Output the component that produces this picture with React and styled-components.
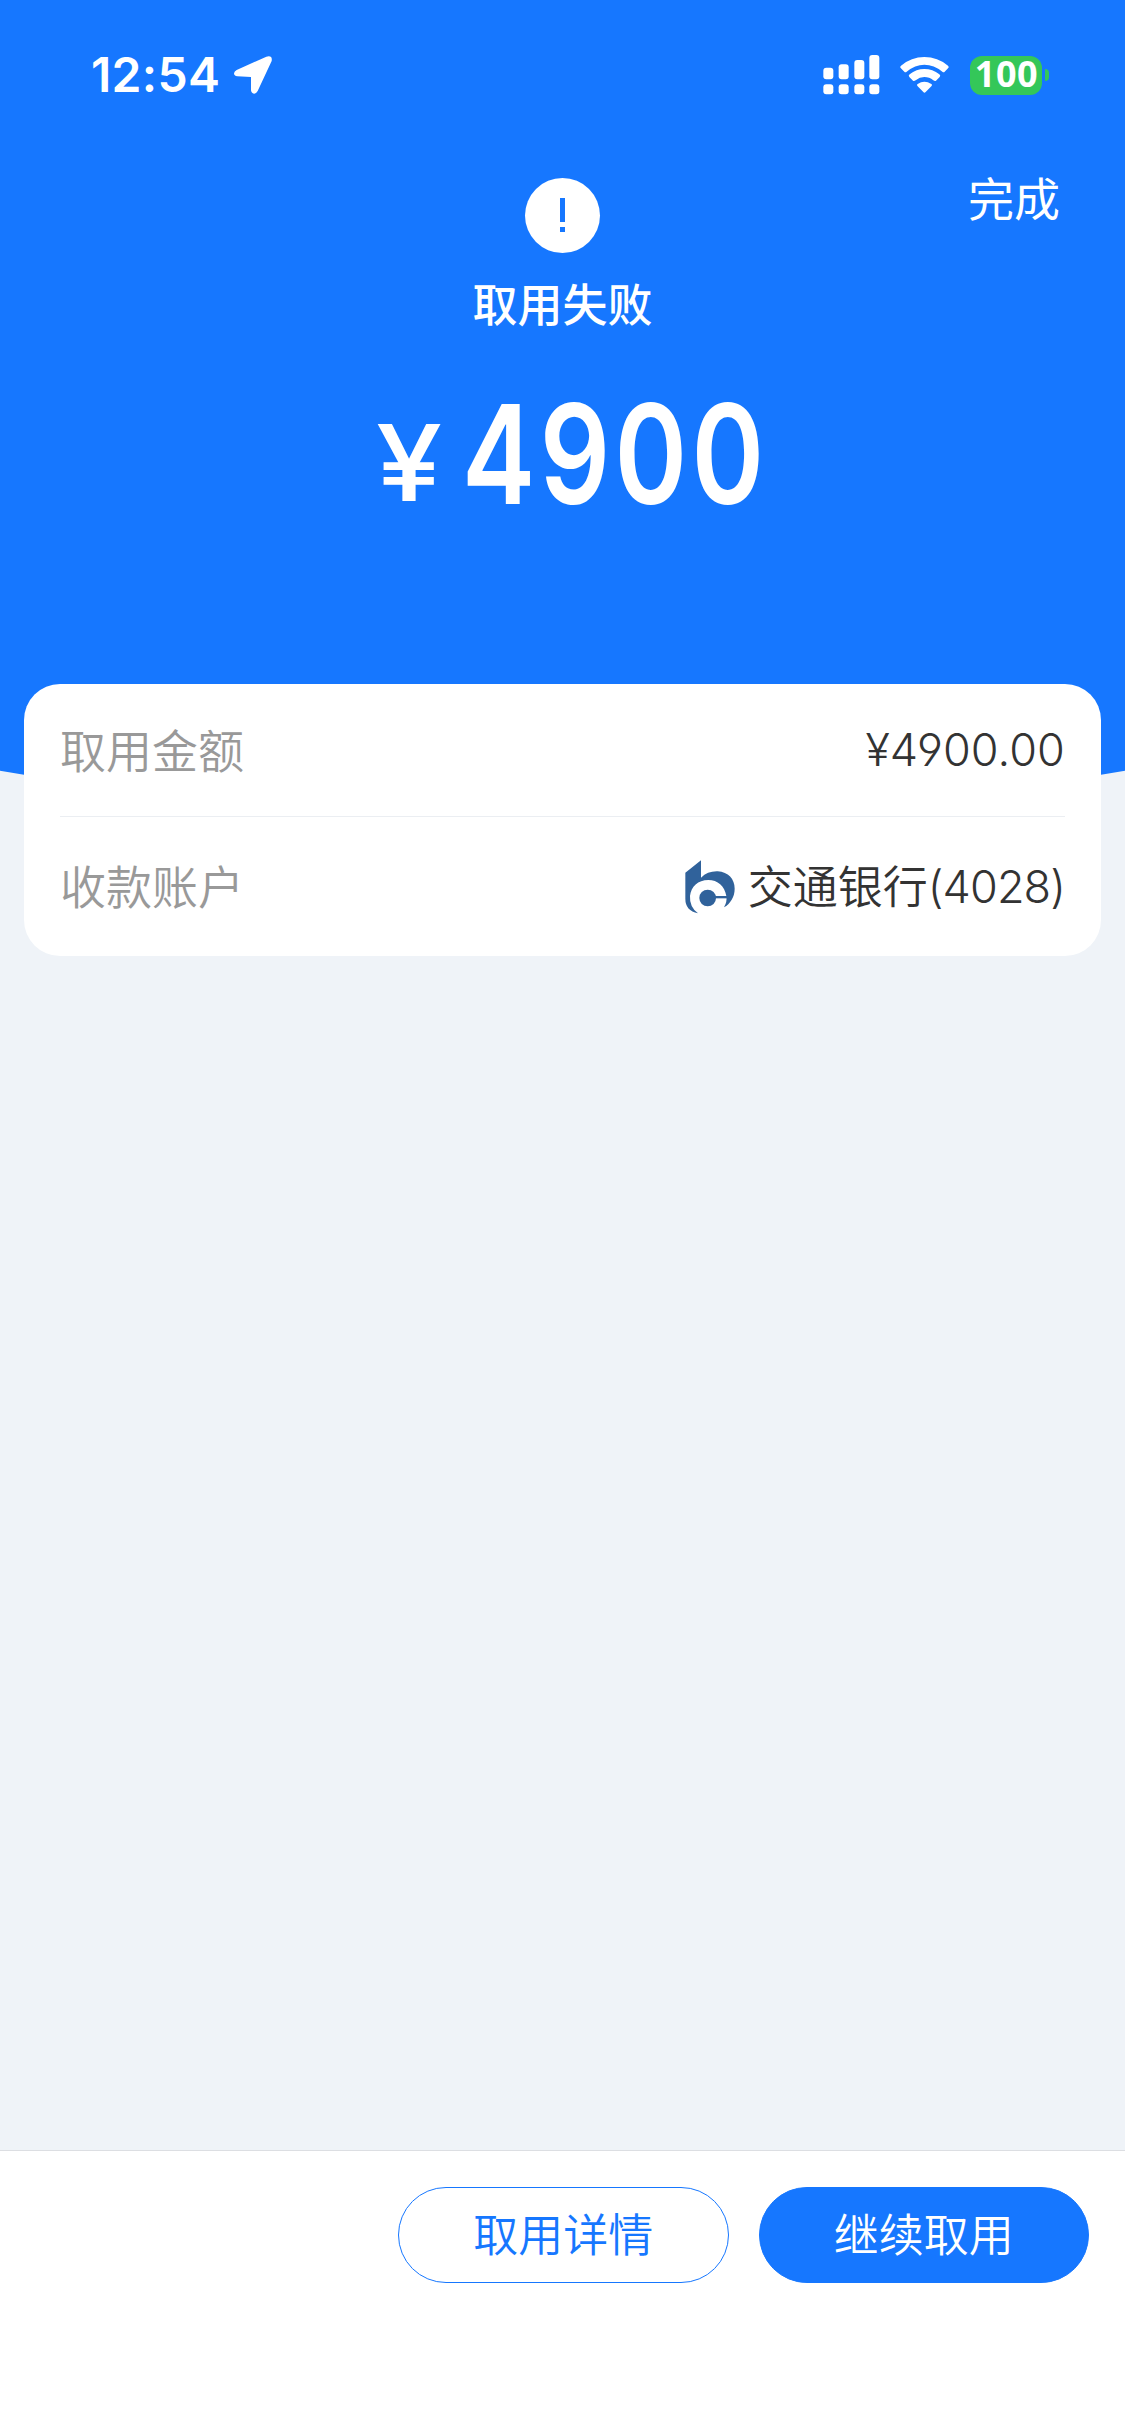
import React from "react";
import styled, { createGlobalStyle } from "styled-components";

const blue = "#1677ff";
const pageGrey = "#eff3f8";
const cjk = `"Noto Sans CJK SC", sans-serif`;

const GlobalStyle = createGlobalStyle`
  * { box-sizing: border-box; }
  body { margin: 0; background: ${pageGrey}; font-family: ${cjk}; }
`;

const Screen = styled.div`
  width: 1125px;
  height: 2435px;
  display: flex;
  flex-direction: column;
  background: ${pageGrey};
  overflow: hidden;
`;

const Header = styled.header`
  flex: none;
  height: 819px;
  background: ${blue};
  clip-path: circle(3300px at 50% -2481px);
  color: #fff;
  display: flex;
  flex-direction: column;
`;

const StatusBar = styled.div`
  height: 178px;
  padding: 45px 76px 0 91px;
  display: flex;
  justify-content: space-between;
  align-items: flex-start;
`;

const StatusGroup = styled.div`
  height: 60px;
  display: flex;
  align-items: center;
`;

const Clock = styled.span`
  width: 143px;
  font: 600 48px/60px Inter, sans-serif;
  letter-spacing: 0.3px;
  white-space: nowrap;
`;

const Glyph = styled.svg`
  display: block;
  flex: none;
  width: ${(p) => p.$w}px;
  height: ${(p) => p.$h}px;
  margin-right: ${(p) => p.$gap || 0}px;
`;

const Battery = styled.span`
  width: 72px;
  height: 39px;
  padding-left: 1px;
  border-radius: 12px;
  background: #34c759;
  font: 700 36px/36px "Noto Sans", sans-serif;
  letter-spacing: 0.5px;
  text-align: center;
`;

const BatteryTip = styled.span`
  width: 4px;
  height: 12px;
  margin-left: 3px;
  border-radius: 0 4px 4px 0;
  background: #34c759;
`;

const NavRow = styled.div`
  height: 75px;
  padding: 0 65px;
  display: grid;
  grid-template-columns: 1fr auto 1fr;
`;

const Done = styled.a`
  grid-column: 3;
  justify-self: end;
  font-size: 46px;
  line-height: 36px;
`;

const AlertBadge = styled.div`
  grid-column: 2;
  width: 75px;
  height: 75px;
  border-radius: 50%;
  background: #fff;
  display: flex;
  flex-direction: column;
  align-items: center;
  padding-top: 20px;
  gap: 5px;
`;

const AlertBar = styled.span`
  width: 5px;
  height: ${(p) => p.$h}px;
  background: ${blue};
`;

const ResultTitle = styled.h1`
  margin: 20px 0 0;
  font-size: 45px;
  font-weight: 500;
  line-height: 60px;
  text-align: center;
`;

const Amount = styled.div`
  margin-top: 41px;
  padding-left: 376px;
  display: flex;
  align-items: baseline;
  font-family: Inter, sans-serif;
  line-height: 160px;
`;

const Currency = styled.span`
  width: 86px;
  font-size: 106px;
  font-weight: 500;
  transform: translateY(-3px) scaleX(1.12);
  transform-origin: left;
`;

const Digits = styled.span`
  font-size: 138px;
  font-weight: 620;
  letter-spacing: 5.5px;
  transform: scaleX(0.798);
  transform-origin: left;
`;

const Card = styled.section`
  position: relative;
  flex: none;
  margin: -135px 24px 0;
  height: 272px;
  padding: 0 36px;
  border-radius: 36px;
  background: #fff;
`;

const Row = styled.div`
  height: ${(p) => p.$h}px;
  display: flex;
  align-items: center;
  justify-content: space-between;
  border-bottom: ${(p) => (p.$divided ? "1px solid #ebeef2" : "0")};
`;

const Label = styled.span`
  padding-bottom: 5px;
  font-size: 46px;
  font-weight: 350;
  line-height: 60px;
  color: #999;
`;

const Value = styled.span`
  display: flex;
  align-items: center;
  font-size: 45px;
  font-weight: 350;
  line-height: 60px;
  color: #333;
`;

const BankName = styled.span`
  padding-bottom: 3px;
`;

const Numeric = styled.span`
  font-family: Inter, sans-serif;
  font-weight: 360;
  font-feature-settings: "cv04" 1;
  letter-spacing: ${(p) => p.$spacing}px;
`;

const Footer = styled.footer`
  margin-top: auto;
  height: 285px;
  padding: 36px 36px 0;
  border-top: 1px solid #dcdee2;
  background: #fff;
  display: flex;
  justify-content: flex-end;
  gap: 30px;
`;

const Button = styled.button`
  width: 330.5px;
  height: 96px;
  padding: 0 0 4px;
  border: 1px solid ${blue};
  border-radius: 48px;
  background: ${(p) => (p.$primary ? blue : "#fff")};
  color: ${(p) => (p.$primary ? "#fff" : blue)};
  font-family: ${cjk};
  font-size: 45px;
  font-weight: 350;
  line-height: 60px;
`;

const LocationIcon = () => (
  <Glyph $w={38} $h={38} viewBox="521 79 114 114" fill="#fff">
    <path d="M618 81Q637 76 634 94L592 184Q588 192 581 192Q573 191 572 182V142L531 140Q521 139 521 131Q522 125 529 121Z" />
  </Glyph>
);

const bars = [
  [69, 82],
  [115, 72],
  [162, 59],
  [207, 44],
];

const SignalIcon = () => (
  <Glyph $w={57} $h={40} $gap={20} viewBox="68 44 171 120" fill="#fff">
    {bars.map(([x, y]) => (
      <g key={x}>
        <rect x={x} y={y} width="30" height={117 - y} rx="9" />
        <rect x={x} y="132" width="30" height="30" rx="9" />
      </g>
    ))}
  </Glyph>
);

const WifiIcon = () => (
  <Glyph $w={49} $h={36} $gap={21} viewBox="300 50 147 108" fill="#fff">
    <path d="M303 76Q334 50 373 50Q413 50 444 76Q448 80 444 84L434 94Q431 97 427 94Q402 73 373 73Q345 73 320 94Q316 97 313 94L302 83Q299 80 303 76Z" />
    <path d="M329 102Q349 86 373 86Q398 86 418 102Q423 106 419 110L408 121Q405 124 400 120Q388 110 373 110Q359 110 347 120Q342 124 339 121L328 110Q324 106 329 102Z" />
    <path d="M353 131Q373 117 394 131Q398 134 394 138L377 155Q373 159 370 155L353 138Q349 134 353 131Z" />
  </Glyph>
);

const BankLogo = () => (
  <Glyph $w={50} $h={54} $gap={13} viewBox="38 59 150 162" fill="#30629b">
    <path d="M39 97L86 60V112Q106 92 136 93C168 95 187 116 187 145C187 170 174 190 155 201Q165 184 162 167C157 137 136 119 108 119C77 119 56 139 53 167Q51 200 77 219Q39 211 39 175Z" />
    <circle cx="106" cy="173" r="25" />
    <rect x="128" y="167" width="37" height="7" />
  </Glyph>
);

export default function App() {
  return (
    <Screen>
      <GlobalStyle />
      <Header>
        <StatusBar>
          <StatusGroup>
            <Clock>12:54</Clock>
            <LocationIcon />
          </StatusGroup>
          <StatusGroup>
            <SignalIcon />
            <WifiIcon />
            <Battery>100</Battery>
            <BatteryTip />
          </StatusGroup>
        </StatusBar>
        <NavRow>
          <AlertBadge>
            <AlertBar $h={24} />
            <AlertBar $h={5} />
          </AlertBadge>
          <Done>完成</Done>
        </NavRow>
        <ResultTitle>取用失败</ResultTitle>
        <Amount>
          <Currency>¥</Currency>
          <Digits>4900</Digits>
        </Amount>
      </Header>
      <Card>
        <Row $h={133} $divided>
          <Label>取用金额</Label>
          <Value>
            <Numeric $spacing={0.1}>¥4900.00</Numeric>
          </Value>
        </Row>
        <Row $h={139}>
          <Label>收款账户</Label>
          <Value>
            <BankLogo />
            <BankName>交通银行</BankName>
            <Numeric $spacing={-0.9}>(4028)</Numeric>
          </Value>
        </Row>
      </Card>
      <Footer>
        <Button>取用详情</Button>
        <Button $primary>继续取用</Button>
      </Footer>
    </Screen>
  );
}
